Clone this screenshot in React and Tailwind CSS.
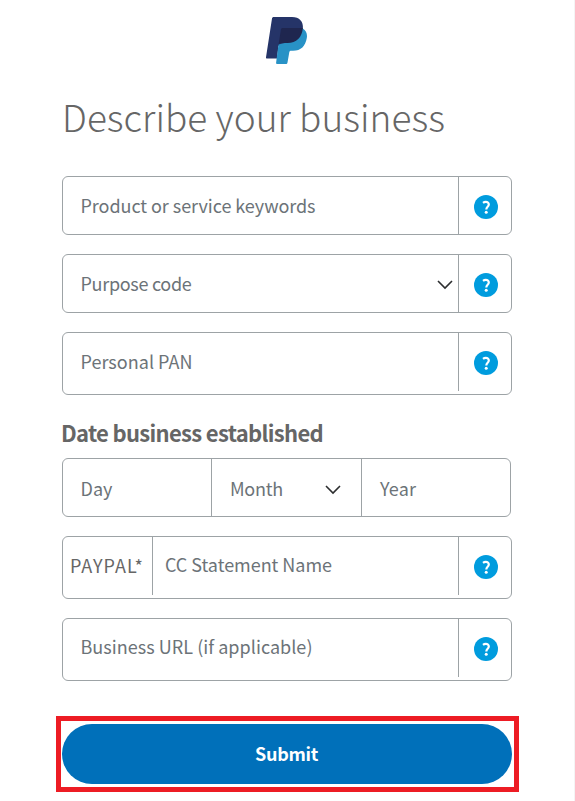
import clsx from 'clsx';

export default function App() {
  return (
    <div className="h-[801px] w-[575px] overflow-hidden border-r border-[#f4f4f4] bg-white font-['Noto_Sans_CJK_SC','Noto_Sans',sans-serif] text-[#6c7378]">
      <header className="flex h-[64px] items-end justify-center pr-[2px]">
        <PayPalLogo />
      </header>

      <form className="ml-[62px] w-[450px]" onSubmit={(event) => event.preventDefault()}>
        <h1 className="mt-[24px] h-[88px] text-[37px] leading-[56px] font-light whitespace-nowrap text-[#666]">
          <Fitted text="Describe your business" width={383} size={37} weight={300} />
        </h1>

        <div className="flex flex-col gap-[19px]">
          <Field label="Product or service keywords" width={235} />
          <Field label="Purpose code" width={111} select />
          <Field label="Personal PAN" width={112} tall />
        </div>

        <h2 className="mt-[19px] -ml-[1px] h-[44px] text-[22px] leading-[36px] font-bold whitespace-nowrap text-[#666]">
          <Fitted text="Date business established" width={262} size={22} weight={700} />
        </h2>

        <div className="mb-[19px] flex h-[59px] w-[449px] rounded-[6px] border border-[#9da3a6]">
          <div className="flex w-[149px] items-center border-r border-[#9da3a6] pl-[17.5px]">
            <Fitted text="Day" width={32} size={18} weight={400} />
          </div>
          <div className="flex w-[150px] items-center justify-between border-r border-[#9da3a6] pr-[20px] pl-[18px]">
            <Fitted text="Month" width={53} size={18} weight={400} />
            <span className="pt-[2px]">
              <Chevron />
            </span>
          </div>
          <div className="flex flex-1 items-center pl-[18px]">
            <Fitted text="Year" width={36} size={18} weight={400} />
          </div>
        </div>

        <div className="flex flex-col gap-[19px]">
          <Field label="CC Statement Name" width={167} prefix="PAYPAL*" tall raised />
          <Field label="Business URL (if applicable)" width={232} tall raised />
        </div>

        <div className="mt-[35px] -ml-[6px] h-[76px] w-[463px] border-[5px] border-[#ed1c24] pt-[3px] pl-[1px]">
          <button
            type="submit"
            className="flex h-[60px] w-[450px] items-center justify-center rounded-[30px] bg-[#0070ba] pr-[1px] pb-[2px] text-[18px] font-bold text-white"
          >
            <Fitted text="Submit" width={63} size={18} weight={700} />
          </button>
        </div>
      </form>
    </div>
  );
}

function Field({ label, width, prefix, select, tall, raised }) {
  return (
    <div className={clsx('flex rounded-[6px] border border-[#9da3a6]', tall ? 'h-[63px]' : 'h-[59px]')}>
      {prefix && (
        <div className="flex h-[58px] w-[90px] items-center border-r border-[#9da3a6] pb-[2px] pl-[7px] text-[#666]">
          <Fitted text={prefix} width={74} size={18} weight={400} />
        </div>
      )}
      <div
        className={clsx(
          'flex flex-1 items-center justify-between border-r border-[#9da3a6] pr-[5px]',
          tall ? 'h-[58px]' : 'h-[57px]',
          raised ? 'pb-[4px]' : 'pb-[2px]',
          prefix ? 'pl-[12px]' : 'pl-[17.5px]'
        )}
      >
        <Fitted text={label} width={width} size={18} weight={400} />
        {select && (
          <span className="pt-[3px]">
            <Chevron />
          </span>
        )}
      </div>
      <div className="flex h-[59px] w-[52px] items-center pl-[15px]">
        <HelpIcon />
      </div>
    </div>
  );
}

const sizes = {
  18: 'text-[18px] leading-[28px]',
  22: 'text-[22px] leading-[36px]',
  37: 'text-[37px] leading-[56px]',
};

const weights = { 300: 'font-light', 400: 'font-normal', 700: 'font-bold' };

// keeps a line of text at a fixed advance by spreading the difference between the letters
function Fitted({ text, width, size, weight }) {
  const fit = (node) => {
    if (!node) return;
    node.style.letterSpacing = '0px';
    const natural = node.getBoundingClientRect().width;
    node.style.letterSpacing = `${(width - natural) / text.length}px`;
  };

  return (
    <span ref={fit} className={clsx('inline-block whitespace-nowrap', sizes[size], weights[weight])}>
      {text}
    </span>
  );
}

function HelpIcon() {
  return (
    <svg width="24" height="24" viewBox="0 0 24 24" fill="none">
      <circle cx="12" cy="12" r="12" fill="#009cde" />
      <path
        d="M9 7.8c.8-.6 1.8-.9 2.8-.9 1.8 0 3 .9 3 2.5 0 2.4-2.5 2.300-2.500 5"
        stroke="white"
        strokeWidth="2.2"
      />
      <circle cx="12.2" cy="17.3" r="1.5" fill="white" />
    </svg>
  );
}

function Chevron() {
  return (
    <svg className="block" width="16" height="12" viewBox="0 0 16 12" fill="none">
      <path d="M1 3l7 7 7-7" stroke="#2c2e2f" strokeWidth="1.6" />
    </svg>
  );
}

function PayPalLogo() {
  return (
    <svg width="42" height="48" viewBox="0 0 42 48">
      <path
        d="M8.8 1H27c7.500 0 11.500 4.500 10.900 11.500L25 28 13.500 30 12 42.500H2c-.8 0-1.100-.4-1-1.200L7 2.500C7.200 1.500 7.800 1 8.800 1z"
        fill="#253468"
      />
      <path
        d="M37.800 12.400c3.500 2.300 4.700 5.600 4 9.600C40.500 30 36 34.800 28 34.800h-2c-1 0-1.500.5-1.700 1.500L22.500 46.500c-.2 1-.7 1.500-1.700 1.500H12c-.7 0-1-.4-.9-1.200l2.400-18.300L24 26z"
        fill="#2892c6"
      />
      <path
        d="M17.700 12H37.900C37 21.500 31.500 27 22.500 27h-6c-1.500 0-2.500.7-3.100 2.500L15.900 13.700c.2-1.100.8-1.700 1.800-1.700z"
        fill="#1f264f"
      />
    </svg>
  );
}
